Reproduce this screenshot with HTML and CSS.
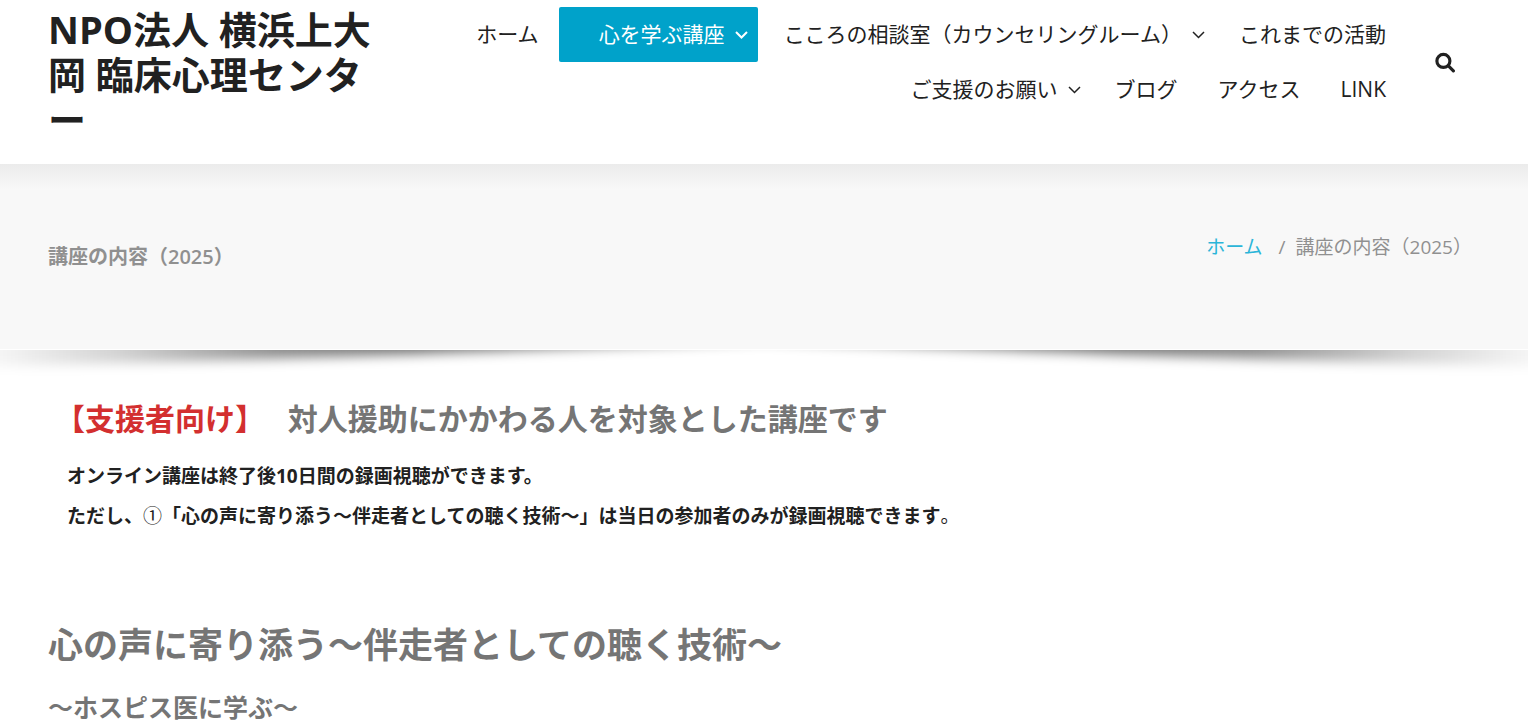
FILE: index.html
```
<!DOCTYPE html>
<html lang="ja">

<head>
  <meta charset="UTF-8" />
  <meta name="viewport" content="width=device-width, initial-scale=1" />
  <title>講座の内容（2025）</title>
  <link rel="stylesheet" href="styles.css">
</head>

<body>
  <header class="site-header">
    <p class="site-title"><a href="#">NPO法人 横浜上大岡 臨床心理センター</a></p>

    <nav class="main-nav">
      <ul class="menu">
        <li><a href="#">ホーム</a></li>
        <li class="has-children active">
          <a href="#">心を学ぶ講座<svg class="caret" viewBox="0 0 13 8"><path d="M1 1l5.5 5.5L12 1" /></svg></a>
        </li>
        <li class="has-children">
          <a href="#">こころの相談室（カウンセリングルーム）<svg class="caret" viewBox="0 0 13 8"><path d="M1 1l5.5 5.5L12 1" /></svg></a>
        </li>
        <li><a href="#">これまでの活動</a></li>
        <li class="has-children">
          <a href="#">ご支援のお願い<svg class="caret" viewBox="0 0 13 8"><path d="M1 1l5.5 5.5L12 1" /></svg></a>
        </li>
        <li><a href="#">ブログ</a></li>
        <li><a href="#">アクセス</a></li>
        <li><a href="#">LINK</a></li>
      </ul>
    </nav>

    <button class="search-button" type="button" aria-label="検索">
      <svg viewBox="0 0 20 20">
        <circle cx="8" cy="8.500" r="6.200" />
        <path d="M12.800 13.300l4.700 4.700" />
      </svg>
    </button>
  </header>

  <section class="page-banner">
    <h1 class="banner-title">講座の内容（2025）</h1>
    <ol class="breadcrumb">
      <li><a href="#">ホーム</a></li>
      <li>講座の内容（2025）</li>
    </ol>
  </section>

  <!-- curved shadow under the banner -->
  <svg class="banner-shadow" viewBox="0 0 1528 30" preserveAspectRatio="none" aria-hidden="true">
    <defs>
      <linearGradient id="fadeX" gradientUnits="userSpaceOnUse" x1="0" y1="0" x2="1528" y2="0">
        <stop offset="0" stop-color="#000" stop-opacity="0.04" />
        <stop offset="0.08" stop-color="#000" stop-opacity="0.18" />
        <stop offset="0.18" stop-color="#000" stop-opacity="0.44" />
        <stop offset="0.27" stop-color="#000" stop-opacity="0.54" />
        <stop offset="0.5" stop-color="#000" stop-opacity="0.4" />
        <stop offset="0.73" stop-color="#000" stop-opacity="0.54" />
        <stop offset="0.82" stop-color="#000" stop-opacity="0.44" />
        <stop offset="0.92" stop-color="#000" stop-opacity="0.18" />
        <stop offset="1" stop-color="#000" stop-opacity="0.04" />
      </linearGradient>
      <filter id="soft" x="-5%" y="-100%" width="110%" height="300%">
        <feGaussianBlur stdDeviation="8 6" />
      </filter>
    </defs>
    <path d="M-60 -30H1588V17C1380 13 1100 5 764 -9C428 5 148 13 -60 17Z" fill="url(#fadeX)" filter="url(#soft)" />
  </svg>

  <main class="content">
    <section class="notice">
      <h3 class="notice-title"><span class="target">【支援者向け】</span>　 対人援助にかかわる人を対象とした講座です</h3>
      <p>オンライン講座は終了後10日間の録画視聴ができます。</p>
      <p>ただし、<span class="regular">①</span>「心の声に寄り添う～伴走者としての聴く技術～」は当日の参加者のみが録画視聴できます<span class="regular">。</span></p>
    </section>

    <h2 class="course-title">心の声に寄り添う～伴走者としての聴く技術～</h2>
    <h3 class="course-subtitle">～ホスピス医に学ぶ～</h3>
  </main>
</body>

</html>
```
FILE: styles.css
```
* {
  box-sizing: border-box;
}

body {
  margin: 0;
  font-family: 'Open Sans', 'Noto Sans CJK JP', sans-serif;
  font-size: 19px;
  line-height: 40px;
  color: #212121;
  background-color: #fff;
}

a {
  color: inherit;
  text-decoration: none;
}

h1,
h2,
h3,
p,
ul,
ol {
  margin: 0;
  padding: 0;
}

h1,
h2,
h3 {
  font-weight: 600;
}

ul,
ol {
  list-style: none;
}

/* Header */
.site-header {
  display: flex;
  align-items: flex-start;
  padding: 7px 72px 22px 48px;
}

.site-title {
  flex: 0 0 328px;
  font-size: 38px;
  font-weight: 700;
  line-height: 45px;
}

.main-nav {
  flex: 1;
}

.menu {
  display: flex;
  flex-wrap: wrap;
  justify-content: flex-end;
}

.menu a {
  display: flex;
  align-items: center;
  gap: 10px;
  padding: 0 20px;
  font-size: 21px;
  line-height: 55px;
}

.menu .has-children a {
  padding-right: 14px;
}

.menu .active {
  margin-right: 6px;
}

.menu .active a {
  padding: 0 10px 0 40px;
  color: #fff;
  background-color: #00a2ca;
  border-radius: 2px;
}

.caret {
  width: 13px;
  height: 8px;
  fill: none;
  stroke: currentColor;
  stroke-width: 1.5;
}

.active .caret {
  stroke-width: 2;
}

.search-button {
  display: flex;
  align-items: center;
  height: 110px;
  margin-left: 29px;
  padding: 0;
  color: #212121;
  background: none;
  border: none;
  cursor: pointer;
}

.search-button svg {
  width: 21px;
  height: 21px;
  fill: none;
  stroke: currentColor;
  stroke-width: 3;
  stroke-linecap: round;
}

/* Banner */
.page-banner {
  display: flex;
  justify-content: space-between;
  padding: 63px 56px 72px 48px;
  color: #909090;
  background: linear-gradient(#ebebeb, #f8f8f8 26px);
}

.banner-title {
  padding-top: 10px;
  font-size: 20px;
  line-height: 40px;
}

.breadcrumb {
  display: flex;
}

.breadcrumb a {
  color: #2bb5d8;
}

.breadcrumb li + li::before {
  content: '/';
  padding: 0 10px 0 16px;
}

.banner-shadow {
  display: block;
  width: 100%;
  height: 30px;
  margin-top: 1px;
}

/* Content */
.content {
  padding: 16px 48px;
}

.notice p {
  padding-left: 19px;
  font-weight: 700;
}

.notice-title {
  padding: 0 0 14px 7px;
  font-size: 30px;
  line-height: 46px;
  color: #757575;
}

.target {
  color: #d32f2f;
}

.notice .regular {
  font-weight: 400;
}

.course-title {
  margin-top: 80px;
  font-size: 35px;
  line-height: 58px;
  color: #757575;
}

.course-subtitle {
  margin-top: 13px;
  font-size: 25px;
  line-height: 40px;
  color: #757575;
}
```
